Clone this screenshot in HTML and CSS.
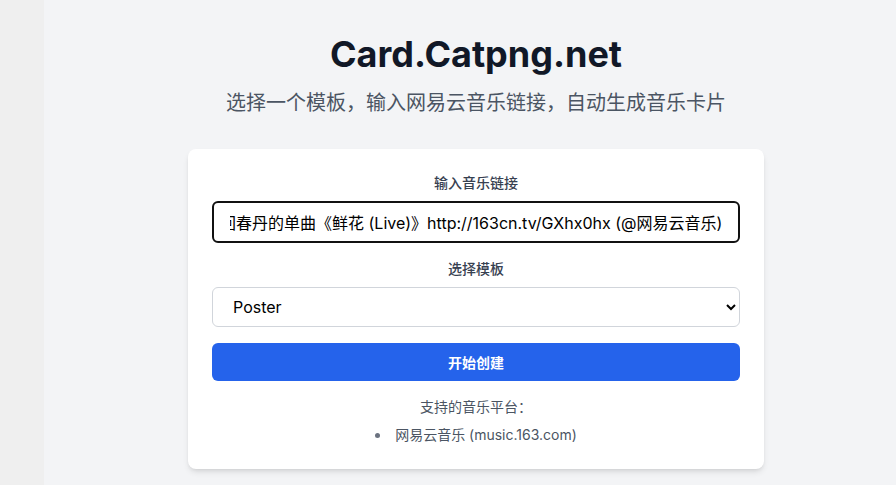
FILE: index.html
```html
<!DOCTYPE html>
<html lang="zh-CN">
<head>
<meta charset="utf-8">
<title>Card.Catpng.net</title>
<link rel="stylesheet" href="styles.css">
</head>
<body>
<main class="page">
  <h1 class="title">Card.Catpng.net</h1>
  <p class="subtitle">选择一个模板，输入网易云音乐链接，自动生成音乐卡片</p>
  <section class="card">
    <label class="label" for="url">输入音乐链接</label>
    <input id="url" class="input" type="text" value="分享回春丹的单曲《鲜花 (Live)》http://163cn.tv/GXhx0hx (@网易云音乐)">
    <label class="label label-gap" for="tpl">选择模板</label>
    <select id="tpl" class="select">
      <option>Poster</option>
    </select>
    <button class="btn" type="button">开始创建</button>
    <p class="support">支持的音乐平台：</p>
    <ul class="platforms">
      <li>网易云音乐 (music.163.com)</li>
    </ul>
  </section>
</main>
<script src="script.js"></script>
</body>
</html>
```
FILE: script.js
```js
var el = document.getElementById('url');
el.scrollLeft = el.scrollWidth;
```
FILE: styles.css
```css
* { box-sizing: border-box; }
html, body { margin: 0; height: 100%; }
body {
  background: #efefef;
  font-family: Inter, "Noto Sans CJK SC", sans-serif;
  overflow: hidden;
}
.page {
  margin-left: 44px;
  min-height: 100%;
  background: #f3f4f6;
  padding: 34px 0 0 12px;
  display: flex;
  flex-direction: column;
  align-items: center;
}
.title {
  margin: 0;
  font-size: 36px;
  line-height: 40px;
  font-weight: 700;
  color: #111827;
}
.subtitle {
  margin: 15px 0 0;
  font-size: 20px;
  line-height: 28px;
  color: #4b5563;
}
.card {
  margin-top: 32px;
  width: 576px;
  background: #fff;
  border-radius: 8px;
  box-shadow: 0 4px 6px -1px rgba(0,0,0,0.1), 0 2px 4px -2px rgba(0,0,0,0.1);
  padding: 24px;
  display: flex;
  flex-direction: column;
  align-items: stretch;
}
.label {
  display: block;
  text-align: center;
  font-size: 14px;
  line-height: 20px;
  font-weight: 500;
  color: #374151;
  margin-bottom: 8px;
}
.label-gap { margin-top: 16px; }
.input {
  height: 42px;
  width: 100%;
  border: 2px solid #111;
  border-radius: 6px;
  padding: 0 16px;
  font-family: Inter, "Noto Sans CJK SC", sans-serif;
  font-size: 16px;
  color: #000;
  background: #fff;
  outline: none;
}
.select {
  height: 40px;
  width: 100%;
  border: 1px solid #d1d5db;
  border-radius: 6px;
  padding: 0 4px 0 16px;
  font-family: Inter, "Noto Sans CJK SC", sans-serif;
  font-size: 16px;
  color: #000;
  background: #fff;
}
.btn {
  margin-top: 16px;
  height: 38px;
  width: 100%;
  border: 0;
  border-radius: 6px;
  background: #2563eb;
  color: #fff;
  font-family: Inter, "Noto Sans CJK SC", sans-serif;
  font-size: 14px;
  font-weight: 600;
}
.support {
  margin: 16px 0 0;
  text-align: center;
  font-size: 14px;
  line-height: 20px;
  color: #4b5563;
}
.platforms {
  margin: 8px 0 0;
  padding: 0;
  list-style: disc inside;
  text-align: center;
  font-size: 14px;
  line-height: 20px;
  color: #4b5563;
}
.platforms li::marker { color: #6b7280; }
```
